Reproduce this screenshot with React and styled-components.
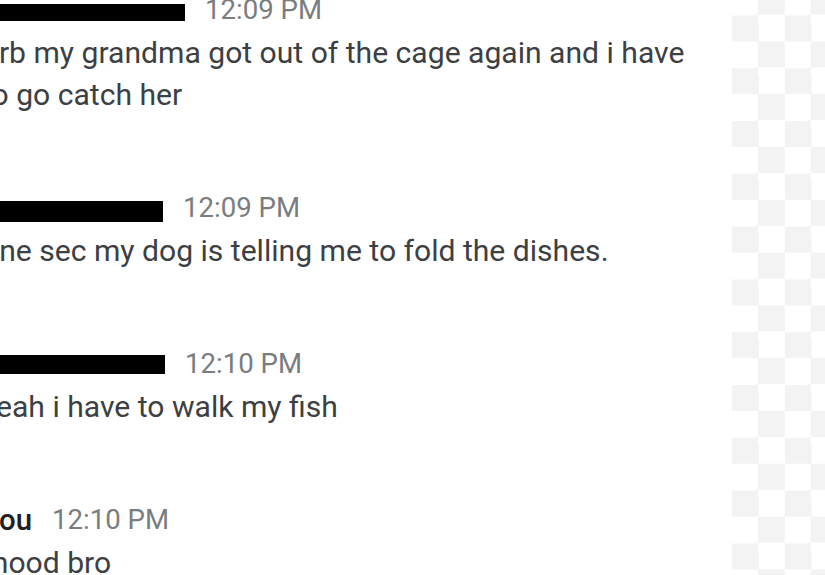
import React from "react";
import styled, { createGlobalStyle } from "styled-components";

const Global = createGlobalStyle`
  html, body {
    margin: 0;
    padding: 0;
    background: #ffffff;
    overflow: hidden;
  }
  body {
    font-family: Roboto, "Noto Sans", "Liberation Sans", sans-serif;
  }
`;

const Page = styled.div`
  display: flex;
  width: 825px;
  height: 575px;
  overflow: hidden;
`;

const ChatColumn = styled.div`
  flex: 1;
  min-width: 0;
  overflow: hidden;
`;

const Feed = styled.div`
  display: flex;
  flex-direction: column;
  gap: 70px;
  margin-top: -12px;
  margin-left: -18px;
`;

const Message = styled.div`
  display: flex;
  flex-direction: column;
`;

const Header = styled.div`
  display: flex;
  align-items: flex-start;
  gap: 20px;
  height: 44px;
  white-space: nowrap;
`;

const Name = styled.span`
  font-size: 29.4px;
  line-height: 44px;
  font-weight: 500;
  color: #202124;
`;

const Redaction = styled.span`
  display: block;
  width: ${(p) => p.$w}px;
  height: ${(p) => p.$h}px;
  margin-top: ${(p) => p.$top}px;
  background: #000000;
`;

const Time = styled.span`
  font-size: 27.6px;
  line-height: 44px;
  color: #7a7d80;
`;

const Body = styled.div`
  font-size: 30.1px;
  line-height: 42px;
  color: #3c4043;
  white-space: nowrap;
`;

const Checker = styled.div`
  width: 93px;
  flex: none;
  height: 100%;
  background-image: conic-gradient(
    #f3f3f3 25%,
    #ffffff 0 50%,
    #f3f3f3 0 75%,
    #ffffff 0
  );
  background-size: 52.8px 52.8px;
  background-position: 0 -11.4px;
`;

const messages = [
  {
    bar: { w: 203, h: 17, top: 16 },
    time: "12:09 PM",
    lines: ["brb my grandma got out of the cage again and i have", "to go catch her"],
  },
  {
    bar: { w: 181, h: 21, top: 15 },
    time: "12:09 PM",
    lines: ["one sec my dog is telling me to fold the dishes."],
  },
  {
    bar: { w: 183, h: 19, top: 13 },
    time: "12:10 PM",
    lines: ["yeah i have to walk my fish"],
  },
  {
    name: "You",
    time: "12:10 PM",
    lines: ["mood bro"],
  },
];

export default function App() {
  return (
    <>
      <Global />
      <Page>
        <ChatColumn>
          <Feed>
            {messages.map((m, i) => (
              <Message key={i}>
                <Header>
                  {m.name ? (
                    <Name>{m.name}</Name>
                  ) : (
                    <Redaction $w={m.bar.w} $h={m.bar.h} $top={m.bar.top} />
                  )}
                  <Time>{m.time}</Time>
                </Header>
                {m.lines.map((l, j) => (
                  <Body key={j}>{l}</Body>
                ))}
              </Message>
            ))}
          </Feed>
        </ChatColumn>
        <Checker />
      </Page>
    </>
  );
}
